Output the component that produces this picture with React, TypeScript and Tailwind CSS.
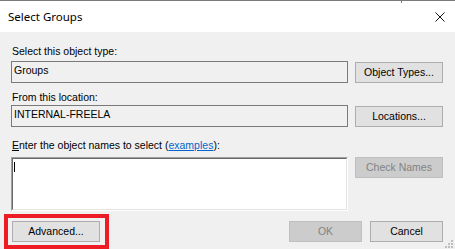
export default function App() {
  return (
    <div className="relative w-[455px] h-[249px] overflow-hidden bg-[#f0f0f0] font-['Liberation_Sans',Arial,sans-serif] text-[10.5px] leading-[13px] text-black">
      <div className="absolute left-[401px] top-0 h-[3px] w-[1px] bg-[#7a7a7a]" />
      <div className="flex h-[32px] items-center justify-between border-t border-[#7a7a7a] bg-white pl-[8px] pr-[10px]">
        <span className="font-['Noto_Sans',sans-serif] text-[11.5px] leading-[16px] text-black">Select Groups</span>
        <svg width="10" height="10" viewBox="0 0 10 10">
          <path d="M0.5 0.5L9.5 9.5M9.5 0.5L0.5 9.5" stroke="#111" strokeWidth="1" fill="none" />
        </svg>
      </div>

      <div className="flex flex-col pl-[11px] pr-[12px]">
        <div className="mt-[13px] pl-[1px]">Select this object type:</div>
        <div className="mt-[3px] flex h-[22px] items-center gap-[7px]">
          <div className="h-[22px] w-[337px] border border-[#7a7a7a] bg-[#f0f0f0] pl-[2px] pt-[2px]">Groups</div>
          <div className="flex h-[21px] w-[88px] items-center justify-center border border-[#adadad] bg-[#e1e1e1]">Object Types...</div>
        </div>

        <div className="mt-[8px] pl-[1px]">From this location:</div>
        <div className="mt-[1px] flex h-[22px] items-center gap-[7px]">
          <div className="h-[22px] w-[337px] border border-[#7a7a7a] bg-[#f0f0f0] pl-[2px] pt-[2px]">INTERNAL-FREELA</div>
          <div className="flex h-[21px] w-[88px] items-center justify-center border border-[#adadad] bg-[#e1e1e1]">Locations...</div>
        </div>

        <div className="mt-[12px] pl-[1px]">
          <span className="underline underline-offset-[1px]">E</span>nter the object names to select (
          <span className="text-[#0066cc] underline underline-offset-[1px]">examples</span>):
        </div>
        <div className="mt-[5px] flex items-start gap-[7px]">
          <div className="h-[54px] w-[337px] border border-t-[#a0a0a0] border-l-[#a0a0a0] border-r-white border-b-white">
            <div className="h-full w-full border border-t-[#696969] border-l-[#696969] border-r-[#e3e3e3] border-b-[#e3e3e3] bg-white">
              <div className="ml-[1px] mt-[3px] h-[10px] w-[1px] bg-black" />
            </div>
          </div>
          <div className="flex h-[21px] w-[88px] items-center justify-center border border-[#bfbfbf] bg-[#cccccc] text-[#838383]">Check Names</div>
        </div>

        <div className="mt-[10px] flex h-[21px] items-center">
          <div className="relative ml-[1px] h-[21px] w-[88px]">
            <div className="flex h-full w-full items-center justify-center border border-[#adadad] bg-[#e1e1e1]">Advanced...</div>
            <div className="absolute -left-[8px] -right-[9px] -top-[7px] -bottom-[7px] border-4 border-[#ed1c24]" />
          </div>
          <div className="ml-auto flex h-[21px] w-[73px] items-center justify-center border border-[#bfbfbf] bg-[#cccccc] text-[#838383]">OK</div>
          <div className="ml-[8px] flex h-[21px] w-[73px] items-center justify-center border border-[#adadad] bg-[#e1e1e1]">Cancel</div>
        </div>
      </div>

      <svg className="absolute bottom-0 right-[1px]" width="10" height="10" viewBox="0 0 10 10">
        <rect x="7" y="1" width="2" height="2" fill="#bfbfbf" />
        <rect x="7" y="4" width="2" height="2" fill="#bfbfbf" />
        <rect x="4" y="4" width="2" height="2" fill="#bfbfbf" />
        <rect x="7" y="7" width="2" height="2" fill="#bfbfbf" />
        <rect x="4" y="7" width="2" height="2" fill="#bfbfbf" />
        <rect x="1" y="7" width="2" height="2" fill="#bfbfbf" />
      </svg>
    </div>
  );
}
